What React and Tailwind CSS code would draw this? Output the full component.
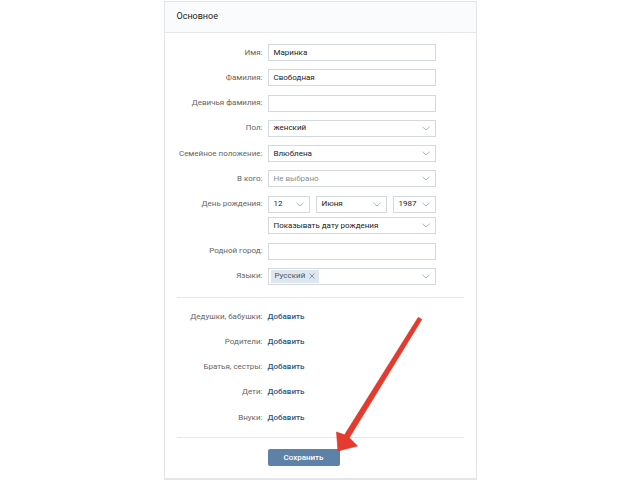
import React from 'react';

const font = { fontFamily: 'Roboto, "Open Sans", Arial, sans-serif' };

function Chevron() {
  return (
    <svg width="8" height="5" viewBox="0 0 8 5" className="shrink-0">
      <path d="M0.5 0.8 L4 4 L7.5 0.8" fill="none" stroke="#a3adba" strokeWidth="0.9" />
    </svg>
  );
}

function Input({ value, className = 'w-[168px]' }) {
  return (
    <div className={`${className} h-[17px] border border-[#d3d9de] bg-white flex items-center px-[5px] text-[8px] text-[#222] whitespace-nowrap`}>
      {value}
    </div>
  );
}

function Select({ value, placeholder, className = 'w-[168px]' }) {
  return (
    <div className={`${className} h-[17px] border border-[#d3d9de] bg-white flex items-center justify-between pl-[5px] pr-[5px] text-[8px] whitespace-nowrap`}>
      <span className={placeholder ? 'text-[#8a8f96]' : 'text-[#222]'}>{value}</span>
      <Chevron />
    </div>
  );
}

function Row({ label, children }) {
  return (
    <div className="flex items-center">
      <div className="w-[103px] shrink-0 text-right text-[8px] text-[#656565] pr-[5px] whitespace-nowrap">{label}</div>
      <div>{children}</div>
    </div>
  );
}

const relatives = ['Дедушки, бабушки:', 'Родители:', 'Братья, сестры:', 'Дети:', 'Внуки:'];

export default function App() {
  return (
    <div className="relative w-[640px] h-[480px] bg-white overflow-hidden" style={font}>
      <div className="pt-[1px]">
        <div className="mx-auto w-[313px] border border-[#e3e5ea] border-b-[2px] bg-white">
          <div className="h-[31px] bg-[#fafbfc] border-b border-[#e7e8ec] flex items-center px-[12px] text-[9px] text-[#222]">
            Основное
          </div>

          <div className="pt-[11px] pb-[12px] flex flex-col gap-[8.3px]">
            <Row label="Имя:"><Input value="Маринка" /></Row>
            <Row label="Фамилия:"><Input value="Свободная" /></Row>
            <Row label="Девичья фамилия:"><Input value="" /></Row>
            <Row label="Пол:"><Select value="женский" /></Row>
            <Row label="Семейное положение:"><Select value="Влюблена" /></Row>
            <Row label="В кого:"><Select value="Не выбрано" placeholder /></Row>
            <div className="flex flex-col gap-[4.5px]">
              <Row label="День рождения:">
                <div className="flex gap-[6px]">
                  <Select value="12" className="w-[42px]" />
                  <Select value="Июня" className="w-[71px]" />
                  <Select value="1987" className="w-[43px]" />
                </div>
              </Row>
              <Row label=""><Select value="Показывать дату рождения" /></Row>
            </div>
            <Row label="Родной город:"><Input value="" /></Row>
            <Row label="Языки:">
              <div className="w-[168px] h-[17px] border border-[#d3d9de] bg-white flex items-center justify-between pl-[2px] pr-[5px] text-[8px]">
                <span className="h-[13px] bg-[#dfe6ee] text-[#45566b] flex items-center px-[4px] gap-[4px]">
                  Русский
                  <svg width="6" height="6" viewBox="0 0 6 6">
                    <path d="M0.5 0.5 L5.5 5.5 M5.5 0.5 L0.5 5.5" stroke="#7e98b4" strokeWidth="1" />
                  </svg>
                </span>
                <Chevron />
              </div>
            </Row>
          </div>

          <div className="mx-[12px] border-t border-[#e7e8ec]" />

          <div className="pt-[6px] pb-[7px] flex flex-col">
            {relatives.map((r) => (
              <div key={r} className="h-[25.3px] flex items-center">
                <div className="w-[103px] shrink-0 text-right text-[8px] text-[#656565] pr-[5px] whitespace-nowrap">{r}</div>
                <a className="text-[8px] text-[#2a5885] font-medium">Добавить</a>
              </div>
            ))}
          </div>

          <div className="mx-[12px] border-t border-[#e7e8ec]" />

          <div className="pt-[11px] pb-[12px] flex">
            <button className="ml-[103px] w-[72px] h-[17px] bg-[#5e81a8] rounded-[2px] text-white text-[8px] font-medium flex items-center justify-center">
              Сохранить
            </button>
          </div>
        </div>
      </div>

      <svg className="absolute inset-0 pointer-events-none" width="640" height="480" viewBox="0 0 640 480">
        <polygon
          points="338,451 336.5,432 344.5,434.8 418.3,317.2 421.8,319.4 349.3,437.8 357.5,446"
          fill="#e53a2e"
          stroke="#d8332a"
          strokeWidth="0.6"
          strokeLinejoin="round"
        />
      </svg>
    </div>
  );
}
